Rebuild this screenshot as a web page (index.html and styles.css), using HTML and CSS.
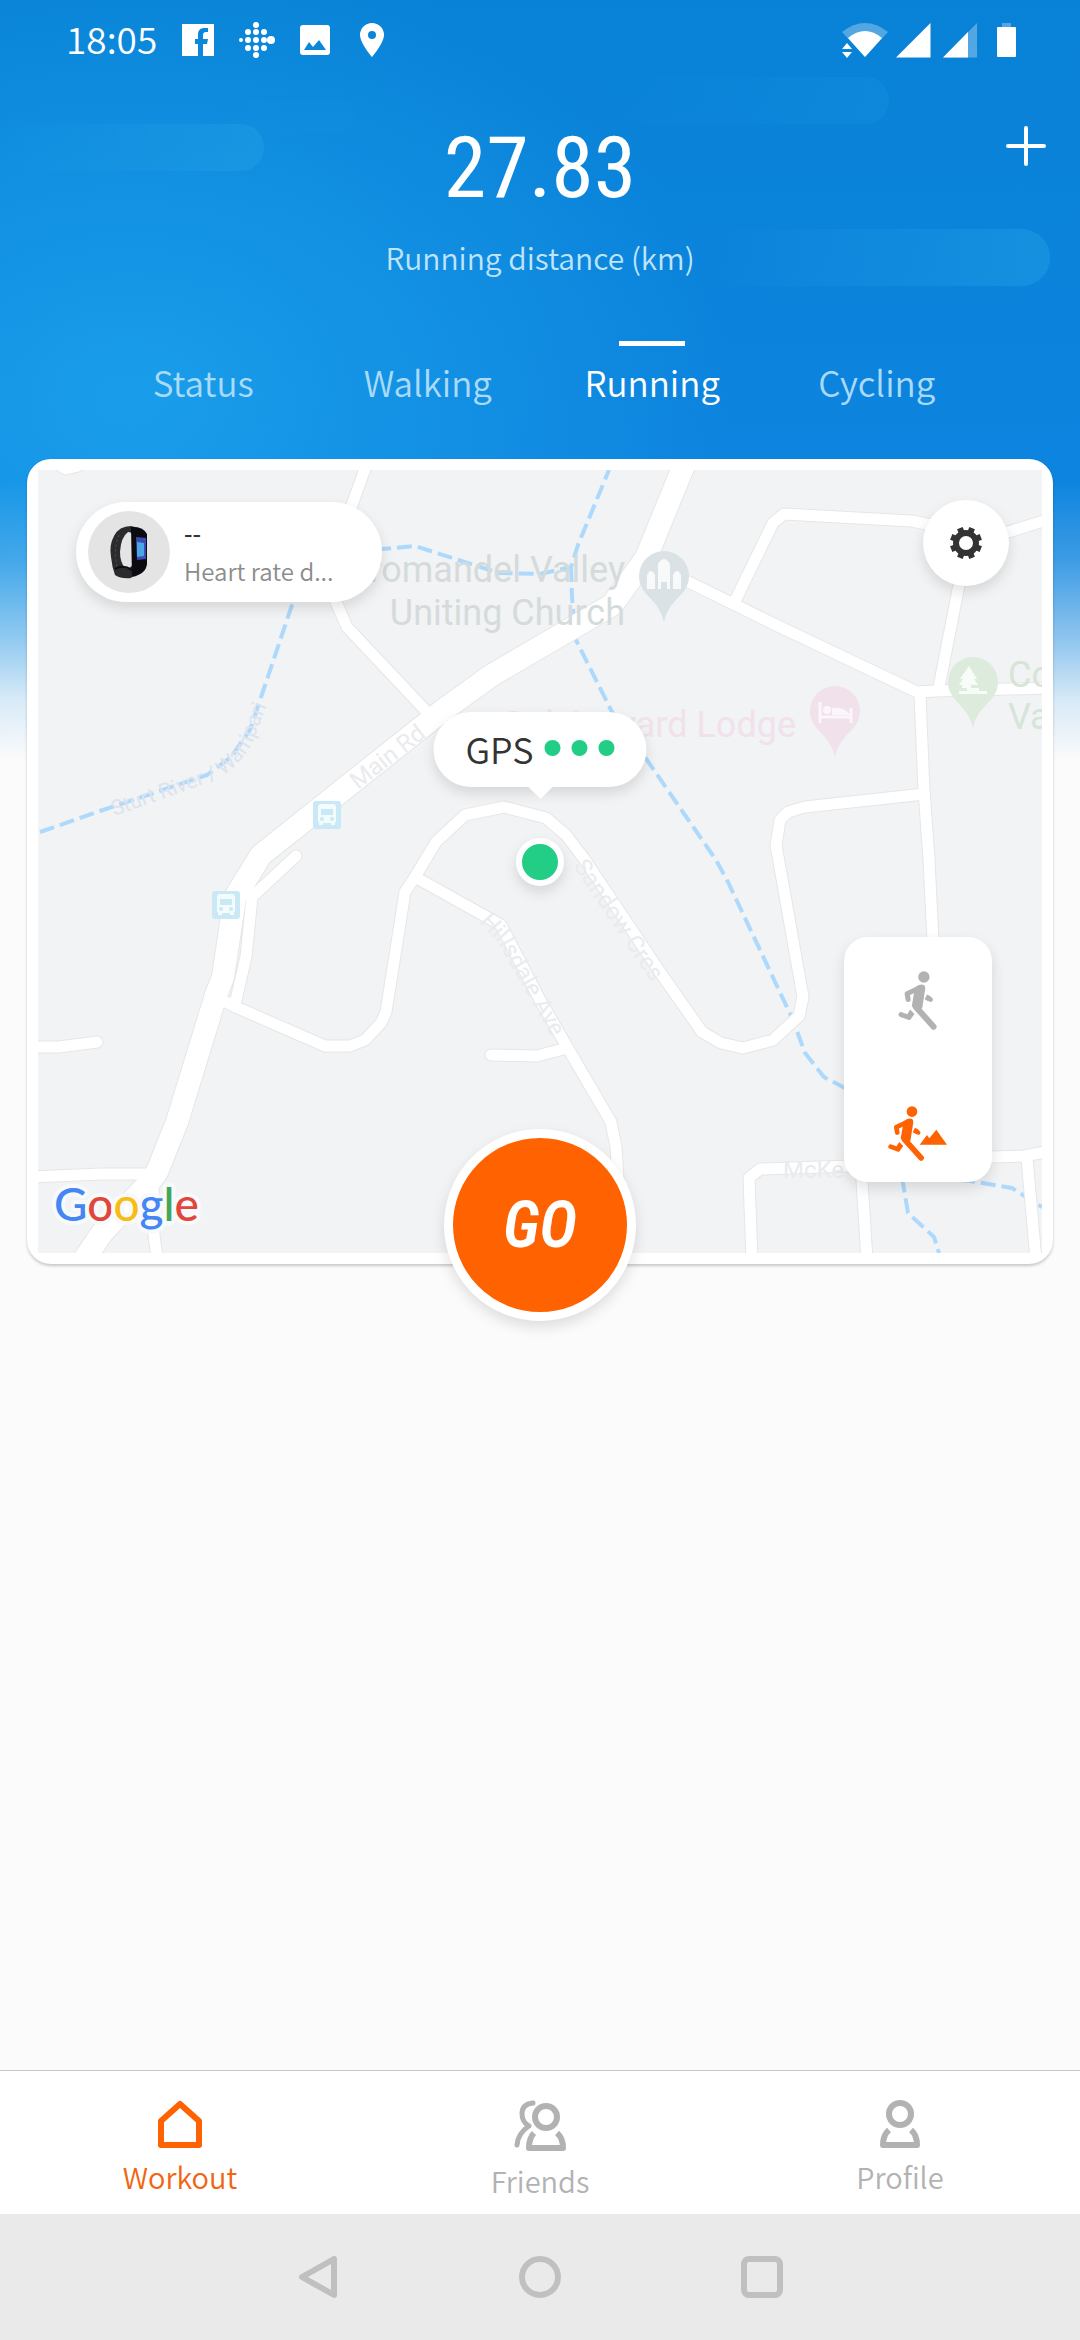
FILE: index.html
```
<!DOCTYPE html>
<html lang="en">
<head>
    <meta charset="UTF-8">
    <meta name="viewport" content="width=device-width, initial-scale=1.0">
    <title>Workout</title>
    <link rel="stylesheet" href="styles.css">
</head>
<body>
    <div class="cloud cloud-left"></div>
    <div class="cloud cloud-top"></div>
    <div class="cloud cloud-small"></div>
    <div class="cloud cloud-right"></div>

    <div class="statusbar">
        <span class="clock">18:05</span>
        <svg class="status-icon" width="32" height="32" viewBox="0 0 32 32"><path fill="#fff" fill-rule="evenodd" d="M0 0h32v32H21V20h4l1-5h-5v-4c0-2 1-3 3-3h2V4h-4c-4 0-6 3-6 6v5h-3v5h3v12H0z"/></svg>
        <svg class="status-icon" width="36" height="36" viewBox="0 0 36 36" fill="#fff">
            <circle cx="17" cy="3" r="3"/><circle cx="17" cy="33" r="3"/>
            <circle cx="9" cy="10" r="3"/><circle cx="17" cy="10" r="3"/><circle cx="25" cy="10" r="3"/>
            <circle cx="2" cy="18" r="2"/><circle cx="9" cy="18" r="3"/><circle cx="17" cy="18" r="3"/><circle cx="25" cy="18" r="3"/><circle cx="32" cy="18" r="4"/>
            <circle cx="9" cy="26" r="3"/><circle cx="17" cy="26" r="3"/><circle cx="25" cy="26" r="3"/>
        </svg>
        <svg class="status-icon" width="30" height="30" viewBox="0 0 30 30"><path fill="#fff" fill-rule="evenodd" d="M3 0h24q3 0 3 3v24q0 3-3 3H3q-3 0-3-3V3q0-3 3-3zM4 25h22l-7-10-6 7-4-5z"/></svg>
        <svg class="status-icon" width="34" height="34" viewBox="-5 0 34 34"><path fill="#fff" fill-rule="evenodd" d="M12 0a12 12 0 0 1 12 12c0 8-12 22-12 22S0 20 0 12A12 12 0 0 1 12 0zm0 8a4 4 0 1 0 0 8 4 4 0 0 0 0-8z"/></svg>
        <svg class="status-right" width="176" height="36" viewBox="0 0 176 36" fill="#fff">
            <path opacity=".3" d="M0 10Q23-8 46 10L23 35z"/>
            <path d="M6 16Q23 2 40 16L23 35z"/>
            <path d="M0 27l5-6 5 6zM0 30h10l-5 6z"/>
            <path d="M54 35.500L88.500 1v34.500z"/>
            <path opacity=".3" d="M101 35.500L135 1v34.500z"/>
            <path d="M101 35.500L126 10v25.500z"/>
            <path opacity=".3" d="M160 1h9v5h-9z"/>
            <path d="M156 5h17q1 0 1 1v28q0 1-1 1h-17q-1 0-1-1V6q0-1 1-1z"/>
        </svg>
    </div>

    <header class="hero">
        <div class="distance">
            <h1>27.83</h1>
            <p>Running distance (km)</p>
        </div>
        <button class="add" aria-label="Add">
            <svg width="40" height="40" viewBox="0 0 40 40"><path d="M20 2v36M2 20h36" stroke="#fff" stroke-width="4" stroke-linecap="round"/></svg>
        </button>
    </header>

    <nav class="tabs">
        <a href="#status">Status</a>
        <a href="#walking">Walking</a>
        <a href="#running" class="active">Running</a>
        <a href="#cycling">Cycling</a>
    </nav>

    <main class="card">
        <svg class="map" viewBox="38 470 1004 783">
            <rect x="38" y="470" width="1004" height="783" fill="#f1f3f5"/>
            <defs>
                <g id="streets">
                    <path d="M370 455L352 505 335 560 336 602 347 627 427 712"/>
                    <path d="M654 565L778 626 917 692 936 691 1050 688"/>
                    <path d="M736 599L773 523 784 514 912 521 926 524 968 532 1008 532 1050 519"/>
                    <path d="M968 535L959 585 939 687"/>
                    <path d="M920 695L924 790 929 860 934 960"/>
                    <path d="M924 794L805 807 788 812 780 820 776 845 779 862 803 997 799 1016 773 1040 743 1048 721 1043 702 1032 662 975 585 860 566 835 546 818 504 807 465 815 436 842 415 877 405 892 386 1012 381 1023 365 1040 350 1046 325 1046 238 1008 222 1000"/>
                    <path d="M415 877L501 925 540 1000 566 1045 611 1122 616 1147 622 1240"/>
                    <path d="M491 1055L537 1056 567 1048"/>
                    <path d="M30 1047L59 1047 97 1042"/>
                    <path d="M30 1177L100 1174 150 1174"/>
                    <path d="M153 1185L154 1235 158 1265"/>
                    <path d="M752 1260L749 1178 760 1169 850 1166 991 1157 1024 1156 1050 1151"/>
                    <path d="M861 1166L867 1260M1027 1158L1036 1260"/>
                    <path d="M296 856L252 897 246 957 235 1004"/>
                    <path d="M55 462L66 469 78 466"/>
                </g>
                <path id="main-road" d="M690 450L682 470 646 558 612 605 540 647 492 675 442 711 261 855 235 897 223 977 216 995 177 1122 157 1172 148 1184 102 1233 70 1280"/>
                <path id="river-label" d="M114 816L160 800 207 783Q236 772 252 744L280 670"/>
                <path id="hills-label" d="M479 922L498 943 560 1052"/>
                <symbol id="pin" viewBox="0 0 50 72"><path d="M25 0a25 25 0 0 1 25 25c0 20-20 22-25 46C20 47 0 45 0 25A25 25 0 0 1 25 0z"/></symbol>
                <symbol id="bus" viewBox="0 0 28 28">
                    <rect width="28" height="28" rx="3" fill="#c9e9f6"/>
                    <path fill="#f4fbfd" fill-rule="evenodd" d="M8 3h12q3 0 3 3v15h-1v3h-4v-2h-8v2H6v-3H5V6q0-3 3-3zm0 5v6h12V8zm1 8a2 2 0 1 0 0 4 2 2 0 0 0 0-4zm10 0a2 2 0 1 0 0 4 2 2 0 0 0 0-4z"/>
                </symbol>
                <symbol id="runner" viewBox="170 118 125 182">
                    <g id="runner-body" fill="currentColor" stroke="currentColor" stroke-linecap="round" stroke-linejoin="round">
                        <circle cx="250" cy="139" r="17" stroke="none"/>
                        <path stroke="none" d="M226 168q14-10 24-5 5 3 4 12l-9 57-11 6-20-12 6-36z"/>
                        <path fill="none" stroke-width="15" d="M236 172L200 189 203 206"/>
                        <path fill="none" stroke-width="18" d="M226 228L279 287"/>
                        <path fill="none" stroke-width="16" stroke-linecap="butt" d="M256 198L267 204"/>
                        <path fill="none" stroke-width="14" d="M265 203L270 206"/>
                        <path fill="none" stroke-width="15" d="M182 251L204 259"/>
                        <path stroke="none" d="M200 251l9-15 13 13-13 18-9-2z"/>
                    </g>
                </symbol>
            </defs>

            <!-- rivers -->
            <g class="river">
                <path d="M40 832L100 811 207 775 231 757 250 730 293 602 310 565 382 549 415 546 499 573 540 574 571 567 578 545 609 470"/>
                <path d="M571 567L572 597 574 620 576 640 612 712 647 760 716 860 728 882 793 1020 805 1053 824 1077 843 1087 880 1110 903 1183 908 1213 934 1237 939 1253"/>
                <path d="M960 1180L970 1181 1012 1188 1042 1207"/>
            </g>

            <!-- roads, grey casing under white fill -->
            <use href="#streets" class="casing" stroke-width="13"/>
            <use href="#main-road" class="casing" stroke-width="24"/>
            <use href="#streets" class="road" stroke-width="11"/>
            <use href="#main-road" class="road" stroke-width="22"/>

            <g class="street-name">
                <text class="river-name"><textPath href="#river-label">Sturt River / Warripari</textPath></text>
                <text transform="translate(358 790) rotate(-38)">Main Rd</text>
                <text transform="translate(573 866) rotate(56)">Sandow Cres</text>
                <text><textPath href="#hills-label">Hillsdale Ave</textPath></text>
                <text x="783" y="1178">McKe</text>
            </g>

            <use href="#bus" x="313" y="801" width="28" height="28"/>
            <use href="#bus" x="212" y="891" width="28" height="28"/>

            <use href="#pin" x="639" y="551" width="50" height="72" fill="#dae2e6"/>
            <path fill="#f8fafa" d="M647 589v-14q4-8 8 0v14zM658 589v-25q6-10 12 0v25h-3v-7h-6v7zM673 589v-14q4-8 8 0v14z"/>
            <use href="#pin" x="810" y="686" width="50" height="72" fill="#f1e1ea"/>
            <path fill="none" stroke="#fbf6f9" stroke-width="3" d="M820 702v21M820 717h31M851 723v-15"/>
            <path fill="#fbf6f9" d="M832 715v-7q12-2 18 7z"/><circle cx="827" cy="710" r="4" fill="#fbf6f9"/>
            <use href="#pin" x="948" y="657" width="50" height="72" fill="#ddebdd"/>
            <path fill="#f8fcf8" d="M969 666l8 13h-3l4 6h-7v3h8v3h8v3h-28v-3h8v-3h-5v-3h-3l4-6h-3z"/>

            <g class="place" text-anchor="end">
                <text x="625" y="582" fill="#d5dbdb">Coromandel Valley</text>
                <text x="625" y="625" fill="#d5dbdb">Uniting Church</text>
                <text x="796" y="737" fill="#f1e1ea">Colvineyard Lodge</text>
            </g>
            <g class="place" fill="#d7e4d8">
                <text x="1008" y="687">Coromandel</text>
                <text x="1008" y="729">Valley</text>
            </g>

            <text class="google" x="54" y="1221"><tspan fill="#4486f4">G</tspan><tspan fill="#e24539">o</tspan><tspan fill="#f8bd15">o</tspan><tspan fill="#4486f4">g</tspan><tspan fill="#40a857">l</tspan><tspan fill="#e24539">e</tspan></text>
        </svg>

        <button class="device">
            <span class="avatar">
                <svg width="40" height="54" viewBox="0 0 40 54">
                    <path fill="#2b2b2d" fill-rule="evenodd" d="M22 1Q10 1 5 11 0 20 2 32q1 10 4 18 6 4 16 3l8-8V3zM19 7q4 0 5 4v28q-2 5-8 4-5-6-5-16 1-15 8-20z"/>
                    <path fill="none" stroke="#555558" stroke-dasharray="2 3" d="M10 10Q4 24 8 42"/>
                    <path fill="none" stroke="#0c0c10" stroke-width="2" d="M6 44q8-5 17 1"/>
                    <path fill="#0c0c10" d="M22 2q12-1 16 7v30q-1 10-15 13z"/>
                    <path fill="#3b4bb0" d="M27 12l10 1v21l-9 1z"/>
                    <path fill="#49a5e8" d="M28 17l7 1v13l-7 1z"/>
                </svg>
            </span>
            <span class="device-text">
                <b>--</b>
                <span>Heart rate d...</span>
            </span>
        </button>

        <button class="settings" aria-label="Settings">
            <svg width="34" height="34" viewBox="-17 -17 34 34">
                <circle r="10" fill="none" stroke="#333" stroke-width="6"/>
                <g stroke="#333" stroke-width="6">
                    <path id="teeth" d="M0-16v5M0 16v-5M-16 0h5M16 0h-5" transform="rotate(22.500)"/>
                    <use href="#teeth" transform="rotate(45)"/>
                </g>
            </svg>
        </button>

        <div class="gps">
            <span>GPS</span>
            <i></i><i></i><i></i>
        </div>
        <div class="here"></div>

        <div class="modes">
            <button class="mode" aria-label="Road run">
                <svg width="42" height="61"><use href="#runner"/></svg>
            </button>
            <button class="mode active" aria-label="Trail run">
                <svg width="60" height="57" viewBox="143 532 180 171">
                    <use href="#runner-body" transform="translate(-20 421) scale(.94)"/>
                    <path fill="currentColor" d="M238 651l22-29 7 10 21-26 32 45z"/>
                </svg>
            </button>
        </div>

        <button class="go">GO</button>
    </main>

    <nav class="bottom-nav">
        <a href="#workout" class="active">
            <svg width="44" height="48" viewBox="0 0 44 48"><path d="M3 45V21L22 4l19 17v24z" fill="none" stroke="currentColor" stroke-width="6" stroke-linejoin="round"/></svg>
            Workout
        </a>
        <a href="#friends">
            <svg width="52" height="52" viewBox="0 0 52 52" fill="none" stroke="currentColor" stroke-width="6">
                <circle cx="32" cy="17" r="11"/>
                <path d="M20 33Q15 38 15 48h34Q49 38 43 33" stroke-linejoin="round"/>
                <path d="M19 3Q8 4 8 14q0 8 7 12Q4 33 3 45" stroke-width="5" stroke-linecap="round" stroke-linejoin="round"/>
            </svg>
            Friends
        </a>
        <a href="#profile">
            <svg width="40" height="48" viewBox="0 0 40 48" fill="none" stroke="currentColor" stroke-width="6">
                <circle cx="20" cy="14" r="11"/>
                <path d="M9 30Q3 35 3 45h34Q37 35 31 30" stroke-linejoin="round"/>
            </svg>
            Profile
        </a>
    </nav>

    <div class="system-bar">
        <button aria-label="Back"><svg width="42" height="42" viewBox="0 0 42 42"><path d="M37 3v36L5 21z"/></svg></button>
        <button aria-label="Home"><svg width="42" height="42" viewBox="0 0 42 42"><circle cx="21" cy="21" r="18"/></svg></button>
        <button aria-label="Recent apps"><svg width="42" height="42" viewBox="0 0 42 42"><rect x="3" y="3" width="36" height="36" rx="5"/></svg></button>
    </div>
</body>
</html>
```
FILE: styles.css
```
* {
    box-sizing: border-box;
}

body {
    position: relative;
    display: flex;
    flex-direction: column;
    min-height: 100vh;
    margin: 0;
    font-family: "Noto Sans CJK SC", "Open Sans", sans-serif;
    font-weight: 350;
    color: #fff;
    background-color: #fbfbfb;
    background-image:
        linear-gradient(rgba(251, 251, 251, 0) 480px, rgba(251, 251, 251, 0.2) 560px, rgba(251, 251, 251, 0.55) 640px, rgba(251, 251, 251, 0.85) 700px, #fbfbfb 760px),
        radial-gradient(ellipse 600px 460px at 130px 400px, rgba(28, 162, 236, 0.85), rgba(28, 162, 236, 0)),
        linear-gradient(#0882d6, #0d84df 460px);
    background-size: 100% 760px;
    background-repeat: no-repeat;
}

button {
    border: 0;
    padding: 0;
    background: none;
    font: inherit;
    color: inherit;
}

svg {
    display: block;
}

a {
    color: inherit;
    text-decoration: none;
}

/* soft bands in the sky behind the header */
.cloud {
    position: absolute;
    z-index: -1;
    height: 47px;
    border-radius: 0 24px 24px 0;
    background: linear-gradient(to right, rgba(34, 160, 228, 0), rgba(34, 160, 228, 0.45));
}

.cloud-left {
    top: 124px;
    left: 0;
    width: 264px;
}

.cloud-top {
    top: 77px;
    right: 191px;
    width: 300px;
    opacity: 0.4;
}

.cloud-small {
    top: 100px;
    left: 220px;
    width: 135px;
    height: 32px;
    opacity: 0.2;
}

.cloud-right {
    top: 229px;
    right: 30px;
    width: 340px;
    height: 57px;
    border-radius: 0 30px 30px 0;
}

.statusbar {
    display: flex;
    align-items: center;
    height: 80px;
    padding: 0 62px 0 66px;
    gap: 25px;
}

.clock {
    font-size: 37px;
    line-height: 76px;
    height: 80px;
}

.status-right {
    margin-left: auto;
}

.hero {
    display: grid;
    grid-template-columns: 1fr auto 1fr;
    padding: 38px 34px 0;
}

.distance {
    grid-column: 2;
    text-align: center;
}

.distance h1 {
    margin: 0;
    font-family: "Roboto Condensed", Roboto, sans-serif;
    font-size: 86px;
    font-weight: 400;
    line-height: 100px;
}

.distance p {
    margin: 19px 0 0;
    font-size: 30px;
    line-height: 40px;
    color: #bfe4fa;
}

.add {
    justify-self: end;
    align-self: start;
    margin-top: 8px;
}

.tabs {
    display: grid;
    grid-template-columns: repeat(4, 1fr);
    margin: 64px 91px 0;
    font-size: 35px;
    line-height: 50px;
    text-align: center;
    color: #a9dbf8;
}

.tabs a::before {
    content: "";
    display: block;
    width: 66px;
    height: 5px;
    margin: 0 auto 11px;
}

.tabs .active {
    color: #fff;
}

.tabs .active::before {
    background: #fff;
}

.card {
    position: relative;
    margin: 52px 27px 0;
    padding: 11px;
    border-radius: 24px;
    background: #fff;
    box-shadow: 0 2px 3px rgba(0, 0, 0, 0.2);
}

.map {
    width: 100%;
}

.casing,
.road,
.river {
    fill: none;
    stroke-linejoin: round;
}

.casing {
    stroke: #e5e6e7;
    stroke-linecap: round;
}

.road {
    stroke: #fff;
    stroke-linecap: round;
}

.river {
    stroke: #add9fc;
    stroke-width: 4;
    stroke-dasharray: 15 6;
}

.street-name {
    font: 24px Roboto, sans-serif;
    fill: #e9ebed;
}

.river-name {
    font-size: 21px;
    fill: #dde3ee;
}

.place {
    font: 36px Roboto, sans-serif;
}

.google {
    font: 500 46px Lato, sans-serif;
    stroke: #f8f9fa;
    stroke-width: 8px;
    stroke-linejoin: round;
    paint-order: stroke;
}

.device,
.settings,
.gps,
.modes,
.here,
.go {
    position: absolute;
    background: #fff;
    box-shadow: 0 6px 14px rgba(0, 0, 0, 0.12);
}

.device {
    top: 43px;
    left: 49px;
    display: flex;
    align-items: center;
    gap: 14px;
    width: 306px;
    height: 100px;
    padding-left: 12px;
    border-radius: 50px;
    text-align: left;
}

.avatar {
    display: grid;
    place-items: center;
    width: 82px;
    height: 82px;
    border-radius: 50%;
    background: #e4e4e4;
}

.device-text {
    font-size: 24px;
    line-height: 38px;
    color: #8c8c8c;
}

.device-text b {
    display: block;
    font-weight: 500;
    color: #333;
}

.settings {
    top: 41px;
    right: 44px;
    display: grid;
    place-items: center;
    width: 86px;
    height: 86px;
    border-radius: 50%;
}

.gps {
    top: 253px;
    left: 50%;
    display: flex;
    align-items: center;
    gap: 11px;
    height: 75px;
    padding: 0 32px 4px;
    border-radius: 38px;
    font-size: 36px;
    color: #333;
    transform: translateX(-50%);
}

.gps::after {
    content: "";
    position: absolute;
    left: 50%;
    bottom: -12px;
    border: 14px solid transparent;
    border-top-color: #fff;
    border-bottom: 0;
    transform: translateX(-50%);
}

.gps i {
    width: 16px;
    height: 16px;
    border-radius: 50%;
    background: #22cd85;
}

.here {
    top: 50%;
    left: 50%;
    width: 48px;
    height: 48px;
    border: 6px solid #fff;
    border-radius: 50%;
    background: #22cd85;
    transform: translate(-50%, -50%);
}

.modes {
    right: 61px;
    bottom: 82px;
    display: flex;
    flex-direction: column;
    justify-content: space-between;
    width: 148px;
    height: 245px;
    padding: 33px 0 20px;
    border-radius: 24px;
}

.mode {
    display: grid;
    place-items: center;
    color: #b2b2b2;
}

.mode.active {
    color: #ff6200;
}

.go {
    bottom: -57px;
    left: 50%;
    width: 192px;
    height: 192px;
    border: 9px solid #fff;
    border-radius: 50%;
    background: #ff6200;
    font: italic 600 64px "Roboto Condensed", Roboto, sans-serif;
    color: #fff;
    transform: translateX(-50%);
}

.bottom-nav {
    display: grid;
    grid-template-columns: repeat(3, 1fr);
    height: 144px;
    margin-top: auto;
    padding-top: 29px;
    border-top: 1px solid #c8c8c8;
    background: #fff;
    font-size: 29px;
    line-height: 40px;
    color: #b2b2b2;
}

.bottom-nav a {
    display: flex;
    flex-direction: column;
    align-items: center;
    gap: 8px;
}

.bottom-nav .active {
    color: #f26411;
}

.bottom-nav .active svg {
    color: #ff6200;
}

.system-bar {
    display: grid;
    grid-template-columns: repeat(3, 222px);
    justify-content: center;
    height: 126px;
    background: #eaeaea;
}

.system-bar button {
    display: grid;
    place-items: center;
}

.system-bar svg {
    fill: none;
    stroke: #c0c0c0;
    stroke-width: 6;
    stroke-linejoin: round;
}
```
